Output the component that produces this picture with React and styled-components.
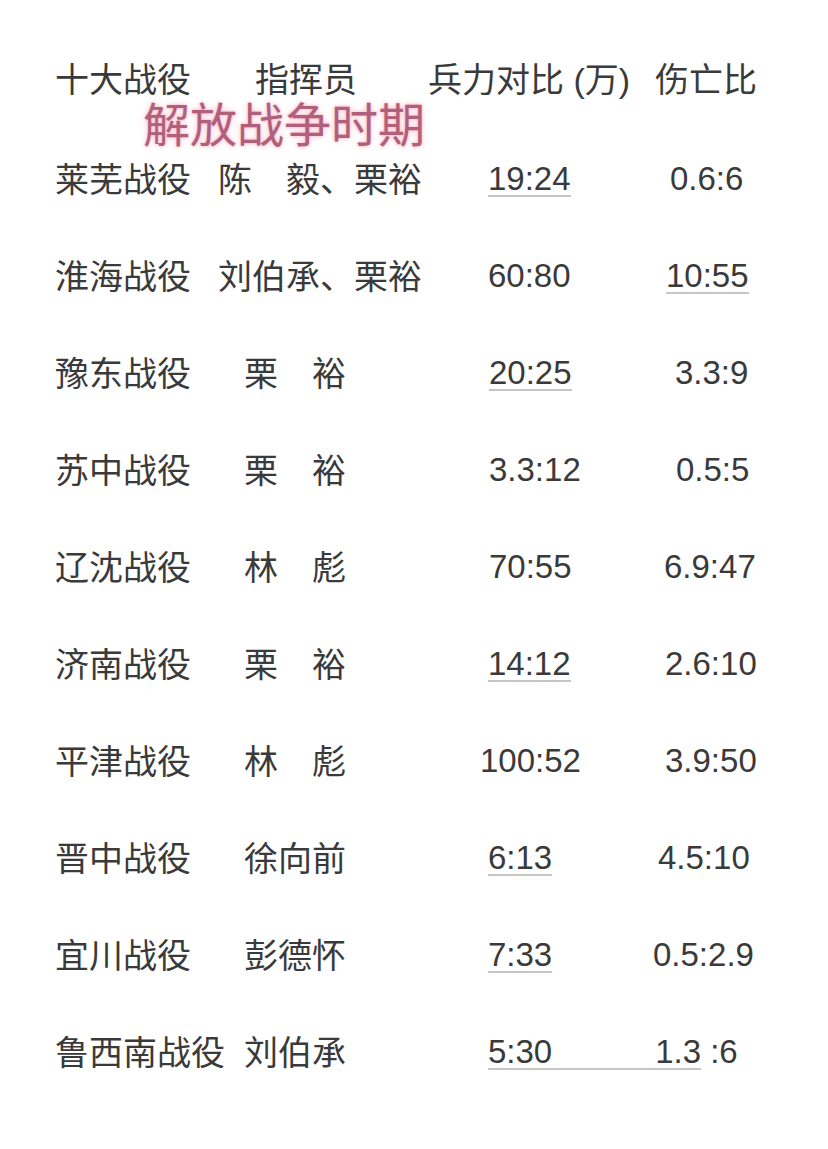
import React from 'react';
import styled, { createGlobalStyle } from 'styled-components';

const Global = createGlobalStyle`
  html, body {
    margin: 0;
    padding: 0;
    background: #ffffff;
  }
  body {
    font-family: "Liberation Sans", "Noto Sans CJK SC", sans-serif;
    color: #3a3a3a;
  }
`;

const rows = [
  { name: '莱芜战役', cmd: '陈　毅、栗裕', cmdAt: 0, force: '19:24', forceAt: 60, fu: true, loss: '0.6:6', lossAt: 18 },
  { name: '淮海战役', cmd: '刘伯承、栗裕', cmdAt: 0, force: '60:80', forceAt: 60, loss: '10:55', lossAt: 14, lu: true },
  { name: '豫东战役', cmd: '栗　裕', cmdAt: 26, force: '20:25', forceAt: 61, fu: true, loss: '3.3:9', lossAt: 23 },
  { name: '苏中战役', cmd: '栗　裕', cmdAt: 26, force: '3.3:12', forceAt: 61, loss: '0.5:5', lossAt: 24 },
  { name: '辽沈战役', cmd: '林　彪', cmdAt: 26, force: '70:55', forceAt: 61, loss: '6.9:47', lossAt: 12 },
  { name: '济南战役', cmd: '栗　裕', cmdAt: 26, force: '14:12', forceAt: 60, fu: true, loss: '2.6:10', lossAt: 13 },
  { name: '平津战役', cmd: '林　彪', cmdAt: 26, force: '100:52', forceAt: 52, loss: '3.9:50', lossAt: 13 },
  { name: '晋中战役', cmd: '徐向前', cmdAt: 26, force: '6:13', forceAt: 60, fu: true, loss: '4.5:10', lossAt: 6 },
  { name: '宜川战役', cmd: '彭德怀', cmdAt: 26, force: '7:33', forceAt: 60, fu: true, loss: '0.5:2.9', lossAt: 1 },
];

const App = () => {
  return (
    <Page>
      <Global />
      <Table>
        <Cell $indent={0}>十大战役</Cell>
        <Cell $indent={37}>指挥员</Cell>
        <Cell $indent={0}>兵力对比 (万)</Cell>
        <Cell $indent={3}>伤亡比</Cell>
      </Table>
      <Period>解放战争时期</Period>
      <Body>
        {rows.map((r) => (
          <Table key={r.name}>
            <Cell $indent={0}>{r.name}</Cell>
            <Cell $indent={r.cmdAt}>{r.cmd}</Cell>
            <Cell $indent={r.forceAt}>
              <Num $under={r.fu}>{r.force}</Num>
            </Cell>
            <Cell $indent={r.lossAt}>
              <Num $under={r.lu}>{r.loss}</Num>
            </Cell>
          </Table>
        ))}
        <Table>
          <Cell $indent={0}>鲁西南战役</Cell>
          <Cell $indent={26}>刘伯承</Cell>
          <Cell $indent={60} $span>
            <Joint>
              <span>5:30</span>
              <span>1.3</span>
            </Joint>
            <Num>&nbsp;:6</Num>
          </Cell>
        </Table>
      </Body>
    </Page>
  );
};

export default App;

const Page = styled.div`
  width: 828px;
  min-height: 1149px;
  box-sizing: border-box;
  padding: 60px 0 0 55px;
`;

const Table = styled.div`
  display: grid;
  grid-template-columns: 163px 210px 224px 1fr;
  height: 40px;
  align-items: center;
`;

const Cell = styled.div`
  padding-left: ${(p) => p.$indent}px;
  grid-column: ${(p) => (p.$span ? '3 / 5' : 'auto')};
  font-size: 34px;
  line-height: 40px;
  white-space: nowrap;
  display: flex;
  align-items: baseline;
`;

const Num = styled.span`
  display: inline-block;
  font-size: 33px;
  line-height: 0.94;
  border-bottom: 2px solid ${(p) => (p.$under ? '#c6c6c6' : 'transparent')};
`;

const Joint = styled.span`
  display: inline-flex;
  justify-content: space-between;
  width: 213px;
  font-size: 33px;
  line-height: 0.94;
  border-bottom: 2px solid #c6c6c6;
`;

const Period = styled.div`
  margin: 0 0 0 88px;
  font-family: "Noto Sans CJK SC", sans-serif;
  font-size: 47px;
  line-height: 44px;
  color: #b0607a;
  text-shadow: 0 0 3px #f6b3c6, 0 0 7px #fbcdd9;
`;

const Body = styled.div`
  display: flex;
  flex-direction: column;
  gap: 57px;
  margin-top: 16px;
`;
